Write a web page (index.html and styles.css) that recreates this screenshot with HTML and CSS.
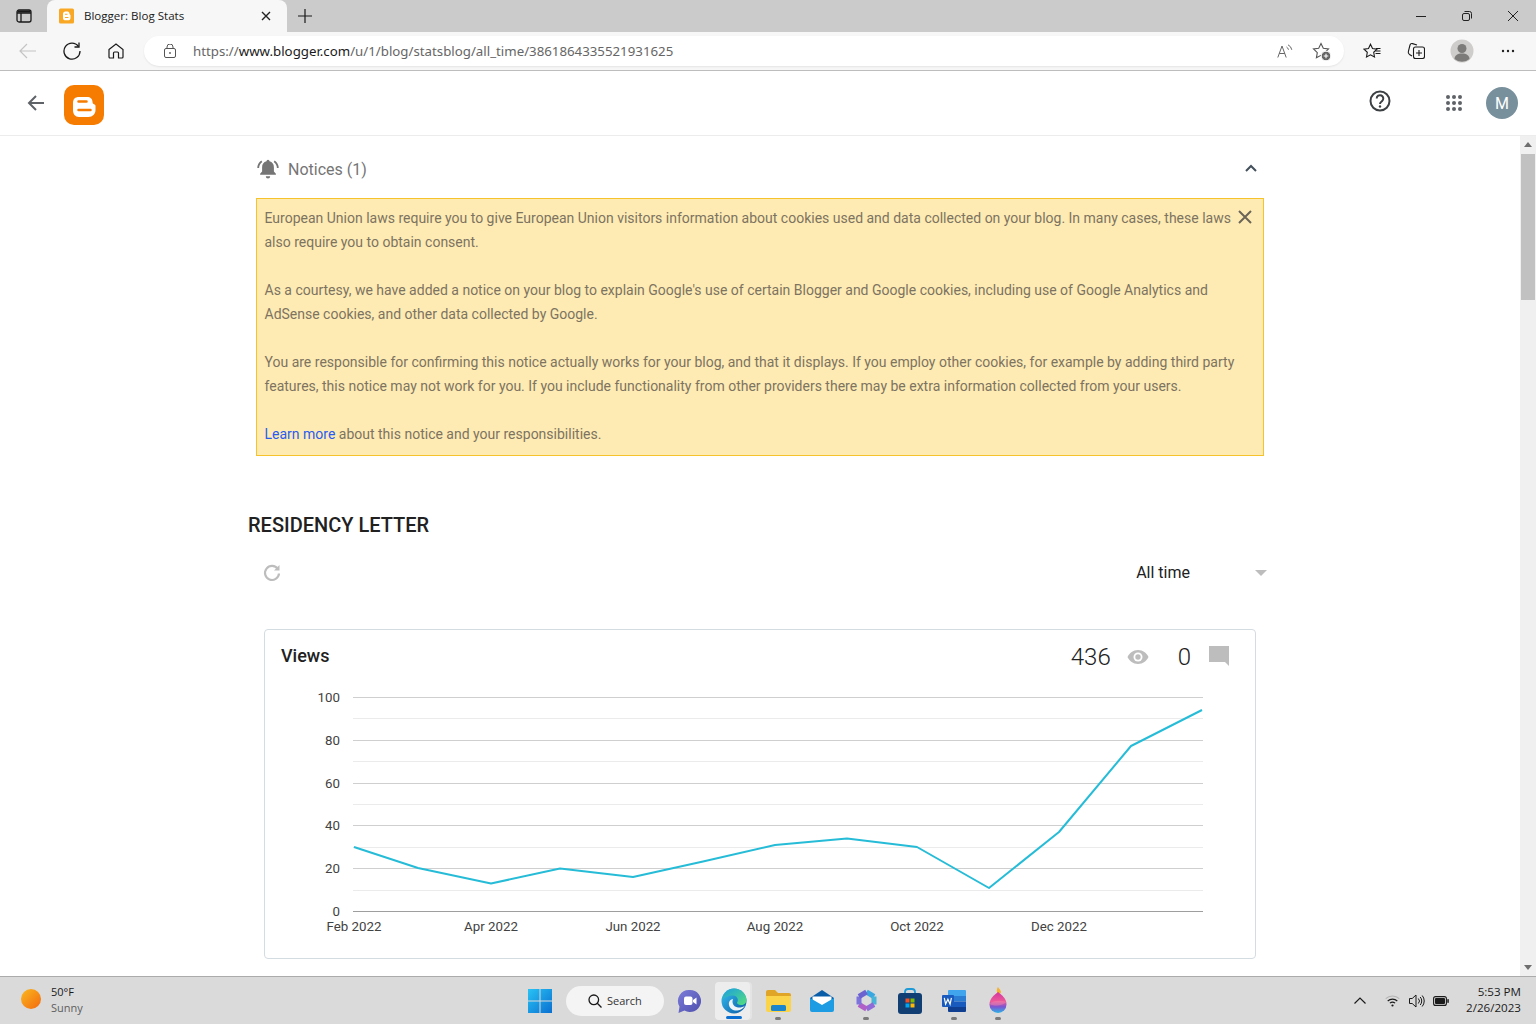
FILE: index.html
```html
<!DOCTYPE html>
<html lang="en">
<head>
<meta charset="utf-8">
<title>Blogger: Blog Stats</title>
<link rel="stylesheet" href="styles.css">
</head>
<body>
<div class="screen">
  <div class="tabstrip">
    <div class="tab-side">
      <svg width="16" height="14" viewBox="0 0 16 14" fill="none" stroke="#1a1a1a" stroke-width="1.3"><rect x="1" y="1" width="14" height="12" rx="2"/><path d="M1 4h14M5 4v9" /><path d="M1.5 2.5h13" stroke-width="2"/></svg>
    </div>
    <div class="tab">
      <svg class="tab-fav" width="16" height="16" viewBox="0 0 16 16"><rect width="15" height="15" y=".5" rx="1.5" fill="#f9a825"/><path d="M4 6c0-1.600 1-2.500 2.400-2.500H8.500C9.800 3.500 10.500 4.500 10.500 6c0 .6.800.5 1 1.200V10c0 1.400-1 2.300-2.400 2.300H6.300C5 12.300 4 11.400 4 10z" fill="#fff"/><path d="M6 6.300h2.500M6 9.500h3.500" stroke="#f9a825" stroke-width="1.100"/></svg>
      <span class="tab-title">Blogger: Blog Stats</span>
      <svg class="tab-close" width="10" height="10" viewBox="0 0 10 10" stroke="#222" stroke-width="1.400"><path d="M1 1l8 8M9 1l-8 8"/></svg>
    </div>
    <div class="tab-new">
      <svg width="14" height="14" viewBox="0 0 14 14" stroke="#1a1a1a" stroke-width="1.200"><path d="M7 0v14M0 7h14"/></svg>
    </div>
    <div class="win-controls">
      <div class="win-btn"><svg width="10" height="10" viewBox="0 0 10 10" stroke="#222"><path d="M0 5.500h10"/></svg></div>
      <div class="win-btn"><svg width="10" height="10" viewBox="0 0 10 10" fill="none" stroke="#222"><rect x=".5" y="2.500" width="7" height="7" rx="1.500"/><path d="M2.500 .5h5a2 2 0 0 1 2 2v5"/></svg></div>
      <div class="win-btn"><svg width="10" height="10" viewBox="0 0 10 10" stroke="#222"><path d="M0 0l10 10M10 0L0 10"/></svg></div>
    </div>
  </div>

  <div class="toolbar">
    <div class="tool-btn"><svg width="18" height="16" viewBox="0 0 18 16" fill="none" stroke="#c4c4c4" stroke-width="1.200"><path d="M17 8H1M8 1L1 8l7 7"/></svg></div>
    <div class="tool-btn"><svg width="18" height="18" viewBox="0 0 18 18" fill="none" stroke="#1a1a1a" stroke-width="1.300"><path d="M15.500 4.500A8 8 0 1 0 17 9"/><path d="M16 .5v4.500h-4.500"/></svg></div>
    <div class="tool-btn"><svg width="16" height="16" viewBox="0 0 16 16" fill="none" stroke="#1a1a1a" stroke-width="1.200"><path d="M1 6.500L8 1l7 5.500V14a1 1 0 0 1-1 1h-3.500v-5a1 1 0 0 0-1-1h-3a1 1 0 0 0-1 1v5H2a1 1 0 0 1-1-1z"/></svg></div>
    <div class="address">
      <svg class="lock" width="12" height="14" viewBox="0 0 12 14" fill="none" stroke="#555" stroke-width="1"><rect x=".5" y="4.500" width="11" height="9" rx="1.500"/><path d="M3 4.500V3a3 3 0 0 1 6 0v1.500"/><circle cx="6" cy="9" r=".9" fill="#555" stroke="none"/></svg>
      <span class="url"><span class="url-dim">https://</span>www.blogger.com<span class="url-dim">/u/1/blog/statsblog/all_time/3861864335521931625</span></span>
      <span class="address-end">
        <svg width="16" height="14" viewBox="0 0 16 14" fill="none" stroke="#666" stroke-width="1"><path d="M.8 13.500L5 2l4.200 11.500M2.200 9.500h5.600"/><path d="M9.500 3a4.500 4.500 0 0 1 2 2.700M11 .8a7 7 0 0 1 3.800 5"/></svg>
        <svg width="19" height="19" viewBox="0 0 19 19" fill="none" stroke="#555" stroke-width="1.100"><path d="M9 1.500l2.300 4.800 5.200.7-3.800 3.600.9 5.200L9 13.300l-4.600 2.500.9-5.200L1.500 7l5.200-.7z"/><circle cx="14" cy="14" r="4.800" fill="#666" stroke="#fff" stroke-width="1"/><path d="M14 11.700v4.600M11.700 14h4.600" stroke="#fff"/></svg>
      </span>
    </div>
    <div class="tool-right">
      <div class="tool-btn"><svg width="18" height="17" viewBox="0 0 18 17" fill="none" stroke="#1a1a1a" stroke-width="1.100"><path d="M7.500 1.200l2 4.300 4.500.6-3.300 3.200.8 4.700L7.500 11.800l-4 2.200.8-4.700L1 6.100l4.500-.6z"/><path d="M12.500 8h5M13 5.500h4.500M12.500 10.500h5" /></svg></div>
      <div class="tool-btn"><svg width="18" height="18" viewBox="0 0 18 18" fill="none" stroke="#1a1a1a" stroke-width="1.100"><path d="M5 14l-2.500-1.500C1 11.500 1 10.500 1.400 9.300L3 3c.4-1.300 1.300-1.700 2.500-1.400L10 3"/><rect x="6.500" y="5" width="11" height="11.500" rx="2" fill="#f7f7f7"/><path d="M12 8v6M9 11h6"/></svg></div>
      <div class="tool-btn tool-gap">
        <svg width="24" height="24" viewBox="0 0 24 24"><circle cx="12" cy="12" r="11.500" fill="#cfcdcb"/><circle cx="12" cy="9.500" r="4.500" fill="#7d7b79"/><path d="M4.500 20c0-3.500 3-5.500 7.500-5.500s7.500 2 7.500 5.500a11.500 11.500 0 0 1-15 0z" fill="#7d7b79"/></svg>
      </div>
      <div class="tool-btn tool-gap"><svg width="14" height="4" viewBox="0 0 14 4" fill="#222"><circle cx="2" cy="2" r="1.200"/><circle cx="7" cy="2" r="1.200"/><circle cx="12" cy="2" r="1.200"/></svg></div>
    </div>
  </div>

  <div class="viewport">
    <header class="app-header">
      <svg class="app-back" width="18" height="16" viewBox="0 0 18 16" fill="none" stroke="#5f6368" stroke-width="2"><path d="M17 8H2M9 1L2 8l7 7"/></svg>
      <svg class="app-logo" width="40" height="40" viewBox="0 0 40 40"><rect width="40" height="40" rx="10" fill="#f57c00"/><path d="M9 18c0-4 2-6 6-6h8c3.500 0 5.500 2 5.500 5 0 1.500 1 2 2 2.500.7.300 1 .8 1 1.500v4c0 4-3 7-7 7H15c-4 0-6-3-6-7z" fill="#fff"/><path d="M14.500 16.500h8M14.500 25h12" stroke="#f57c00" stroke-width="2.500" stroke-linecap="round"/></svg>
      <div class="app-actions">
        <svg class="app-help" width="22" height="22" viewBox="0 0 22 22" fill="none" stroke="#3c4043" stroke-width="2"><circle cx="11" cy="11" r="9.500"/><path d="M7.700 8.500a3.300 3.300 0 1 1 5.300 2.600c-1.300 1-2 1.500-2 3"/><circle cx="11" cy="16.500" r="1.200" fill="#3c4043" stroke="none"/></svg>
        <svg class="app-grid" width="16" height="16" viewBox="0 0 16 16" fill="#5f6368"><circle cx="2" cy="2" r="2"/><circle cx="8" cy="2" r="2"/><circle cx="14" cy="2" r="2"/><circle cx="2" cy="8" r="2"/><circle cx="8" cy="8" r="2"/><circle cx="14" cy="8" r="2"/><circle cx="2" cy="14" r="2"/><circle cx="8" cy="14" r="2"/><circle cx="14" cy="14" r="2"/></svg>
        <div class="avatar">M</div>
      </div>
    </header>

    <div class="page-row">
      <main class="page">
        <div class="content">
          <div class="notices-head">
            <svg width="22" height="20" viewBox="0 0 22 20" fill="#757575"><path d="M11 .8a1.500 1.500 0 0 1 1.500 1.500c2.900.7 4.400 3 4.400 5.900v4.300l2 2.200v1H3.100v-1l2-2.200V8.200c0-2.900 1.500-5.200 4.400-5.900A1.500 1.500 0 0 1 11 .8z"/><path d="M8.800 17.300h4.400a2.200 2.200 0 0 1-4.400 0z"/><path d="M4.800 2.200A8.500 8.500 0 0 0 1.200 9M17.200 2.200A8.500 8.500 0 0 1 20.800 9" fill="none" stroke="#757575" stroke-width="1.800"/></svg>
            <span class="notices-title">Notices (1)</span>
            <svg class="notices-chevron" width="12" height="8" viewBox="0 0 12 8" fill="none" stroke="#44505c" stroke-width="2"><path d="M1 7l5-5 5 5"/></svg>
          </div>
          <div class="notice">
            <svg class="notice-close" width="14" height="14" viewBox="0 0 14 14" stroke="#6b6558" stroke-width="2"><path d="M1 1l12 12M13 1L1 13"/></svg>
            <p>European Union laws require you to give European Union visitors information about cookies used and data collected on your blog. In many cases, these laws<br>also require you to obtain consent.</p>
            <p>As a courtesy, we have added a notice on your blog to explain Google's use of certain Blogger and Google cookies, including use of Google Analytics and<br>AdSense cookies, and other data collected by Google.</p>
            <p>You are responsible for confirming this notice actually works for your blog, and that it displays. If you employ other cookies, for example by adding third party<br>features, this notice may not work for you. If you include functionality from other providers there may be extra information collected from your users.</p>
            <p><a class="notice-link" href="#">Learn more</a> about this notice and your responsibilities.</p>
          </div>

          <h1 class="blog-title">RESIDENCY LETTER</h1>

          <div class="controls">
            <svg class="refresh" width="18" height="18" viewBox="0 0 18 18" fill="none" stroke="#bdbdbd" stroke-width="2.200"><path d="M14.800 5A7 7 0 1 0 16 9.500"/><path d="M16.500 1v5.500H11" fill="#bdbdbd" stroke="none"/></svg>
            <span class="range">All time</span>
            <span class="range-arrow"></span>
          </div>

          <section class="card">
            <div class="card-head">
              <h2 class="card-title">Views</h2>
              <span class="stat-num">436</span>
              <svg class="stat-eye" width="22" height="16" viewBox="0 0 22 16"><path d="M11 1C6 1 2.500 4 .5 8c2 4 5.500 7 10.500 7s8.500-3 10.500-7C19.500 4 16 1 11 1z" fill="#bdbdbd"/><circle cx="11" cy="8" r="4.500" fill="#fff"/><circle cx="11" cy="8" r="2.700" fill="#bdbdbd"/></svg>
              <span class="stat-num stat-zero">0</span>
              <svg class="stat-comment" width="20" height="20" viewBox="0 0 20 20"><path d="M0 0h20v20l-4-4H0z" fill="#bdbdbd"/></svg>
            </div>
            <svg class="chart" width="990" height="278" viewBox="265 680 990 278">
              <g class="grid-minor">
                <path d="M353 718.500h850M353 761.500h850M353 804.500h850M353 847.500h850M353 890.500h850"/>
              </g>
              <g class="grid-major">
                <path d="M353 697.500h850M353 740.500h850M353 783.500h850M353 825.500h850M353 868.500h850"/>
              </g>
              <path class="axis" d="M353 911.500h850"/>
              <polyline class="series" points="354,847 418,868 491,883.500 560,868.500 633,877 703,861.500 775,845 847,838.500 917,847 989,888 1059,832 1131,746 1202,710"/>
              <g class="y-labels">
                <text x="340" y="702">100</text>
                <text x="340" y="745">80</text>
                <text x="340" y="788">60</text>
                <text x="340" y="830">40</text>
                <text x="340" y="873">20</text>
                <text x="340" y="916">0</text>
              </g>
              <g class="x-labels">
                <text x="354" y="931">Feb 2022</text>
                <text x="491" y="931">Apr 2022</text>
                <text x="633" y="931">Jun 2022</text>
                <text x="775" y="931">Aug 2022</text>
                <text x="917" y="931">Oct 2022</text>
                <text x="1059" y="931">Dec 2022</text>
              </g>
            </svg>
          </section>
        </div>
      </main>
      <div class="scrollbar">
        <span class="sb-arrow sb-up"></span>
        <div class="sb-track"><div class="sb-thumb"></div></div>
        <span class="sb-arrow sb-down"></span>
      </div>
    </div>
  </div>

  <footer class="taskbar">
    <div class="weather">
      <span class="sun"></span>
      <div class="weather-text"><span class="temp">50°F</span><span class="cond">Sunny</span></div>
    </div>
    <div class="task-center">
      <div class="task-icon">
        <svg width="24" height="24" viewBox="0 0 24 24"><defs><linearGradient id="winG" x1="0" y1="0" x2="1" y2="1"><stop offset="0" stop-color="#29c3f5"/><stop offset="1" stop-color="#0a6fd0"/></linearGradient></defs><path d="M0 0h11.500v11.500H0zM12.500 0H24v11.500H12.500zM0 12.500h11.500V24H0zM12.500 12.500H24V24H12.500z" fill="url(#winG)"/></svg>
      </div>
      <div class="search-pill">
        <svg width="14" height="14" viewBox="0 0 14 14" fill="none" stroke="#1a1a1a" stroke-width="1.300"><circle cx="5.800" cy="5.800" r="4.800"/><path d="M9.300 9.300l4.200 4.200"/></svg>
        <span>Search</span>
      </div>
      <div class="task-icon">
        <svg width="24" height="26" viewBox="0 0 24 26"><defs><linearGradient id="chatG" x1="0" y1="0" x2="1" y2="1"><stop offset="0" stop-color="#7b7bd9"/><stop offset="1" stop-color="#4f4fae"/></linearGradient></defs><path d="M13 2a11 11 0 1 1-5.500 20.500L1.500 25l1-6.500A11 11 0 0 1 13 2z" fill="url(#chatG)"/><rect x="7" y="8.500" width="8.500" height="8.500" rx="2" fill="#fff"/><path d="M16 12l3.500-2.500v7L16 14z" fill="#fff"/></svg>
      </div>
      <div class="task-icon task-active">
        <svg width="26" height="26" viewBox="0 0 26 26"><defs><linearGradient id="edgeA" x1="0" y1="0" x2="1" y2="1"><stop offset="0" stop-color="#35c1f1"/><stop offset="1" stop-color="#0c59a4"/></linearGradient><linearGradient id="edgeB" x1="0" y1="0" x2="1" y2="1"><stop offset="0" stop-color="#1b9de2"/><stop offset="1" stop-color="#54e07c"/></linearGradient></defs><circle cx="13" cy="13" r="12.500" fill="url(#edgeA)"/><path d="M1 12C2 5 7 .5 13 .5c7 0 12.500 5.500 12.500 11.500 0 3-2.500 5-5.500 5-2.500 0-4-1-4-2.500 2-2 .5-7-4-7C8 7.500 3.500 9 1 12z" fill="url(#edgeB)"/><path d="M12 11c-3 .5-4.500 3-4 6 .6 3.500 4.500 6 8.500 5.500 3-.3 6-2 7.500-5-2 1.800-5.500 2.600-8 1.800-3.500-1-5.500-4.300-4-8.300z" fill="#f0f4f9"/></svg>
        <span class="run-active"></span>
      </div>
      <div class="task-icon">
        <svg width="25" height="22" viewBox="0 0 25 22"><path d="M0 2a2 2 0 0 1 2-2h7l3 3h11a2 2 0 0 1 2 2v3H0z" fill="#e0a526"/><path d="M0 6h25v14a2 2 0 0 1-2 2H2a2 2 0 0 1-2-2z" fill="#fbd44a"/><rect x="5" y="15" width="15" height="6" rx="1.500" fill="#1b86cf"/></svg>
        <span class="run-dot"></span>
      </div>
      <div class="task-icon">
        <svg width="24" height="22" viewBox="0 0 24 22"><path d="M0 8L12 0l12 8v1L12 16 0 9z" fill="#0a5ea8"/><path d="M2.500 6.500h19v6L12 17l-9.500-4.500z" fill="#fff"/><path d="M0 8l12 7 12-7v12a2 2 0 0 1-2 2H2a2 2 0 0 1-2-2z" fill="#1d9ce3"/></svg>
      </div>
      <div class="task-icon">
        <svg width="21" height="23" viewBox="0 0 21 23" fill="none" stroke-width="5" stroke-linejoin="round"><path d="M10.500 3L18 7.500" stroke="#3aa7e0"/><path d="M18 7.500v8" stroke="#48b5d8"/><path d="M18 15.500L10.500 20" stroke="#8e6bd8"/><path d="M10.500 20L3 15.500" stroke="#b05fc8"/><path d="M3 15.500v-8" stroke="#7c74dc"/><path d="M3 7.500L10.500 3" stroke="#6c62d0"/></svg>
        <span class="run-dot"></span>
      </div>
      <div class="task-icon">
        <svg width="24" height="26" viewBox="0 0 24 26"><path d="M7 7V4a3 3 0 0 1 3-3h4a3 3 0 0 1 3 3v3" fill="none" stroke="#1e9ad6" stroke-width="1.800"/><rect y="5" width="24" height="21" rx="3" fill="#123f73"/><path d="M7.500 10.500h4v4h-4z" fill="#f25022"/><path d="M12.500 10.500h4v4h-4z" fill="#7fba00"/><path d="M7.500 15.500h4v4h-4z" fill="#00a4ef"/><path d="M12.500 15.500h4v4h-4z" fill="#ffb900"/></svg>
      </div>
      <div class="task-icon">
        <svg width="24" height="22" viewBox="0 0 24 22"><path d="M6 1a1 1 0 0 1 1-1h16a1 1 0 0 1 1 1v5H6z" fill="#41a5ee"/><path d="M6 6h18v5.500H6z" fill="#2b7cd3"/><path d="M6 11.500h18V17H6z" fill="#185abd"/><path d="M6 17h18v4a1 1 0 0 1-1 1H7a1 1 0 0 1-1-1z" fill="#103f91"/><rect y="5" width="12" height="12" rx="1" fill="#185abd"/><path d="M2.300 7.800l1.300 6.400 2.300-5 2.200 5 1.300-6.400" fill="none" stroke="#fff" stroke-width="1.200"/></svg>
        <span class="run-dot"></span>
      </div>
      <div class="task-icon">
        <svg width="20" height="27" viewBox="0 0 20 27"><defs><linearGradient id="pnt" x1="0" y1="0" x2="0" y2="1"><stop offset="0" stop-color="#d4359f"/><stop offset=".45" stop-color="#ec5a9a"/><stop offset=".7" stop-color="#7d55d0"/><stop offset="1" stop-color="#27b5e8"/></linearGradient></defs><path d="M10 0c.8 2 3 3 3 5s-2 2.500-3 1.500S8 3 10 0z" fill="#f6b12d"/><path d="M10 5c4 3 8.500 6.500 8.500 12.500a8.500 8.500 0 0 1-17 0C1.500 11.500 6 8 10 5z" fill="url(#pnt)"/><path d="M1.500 17c4-4 11-4 17-2-3 3-10 5-17 2z" fill="#f08ab0" opacity=".45"/></svg>
        <span class="run-dot"></span>
      </div>
    </div>
    <div class="tray">
      <svg class="tray-chevron" width="12" height="7" viewBox="0 0 12 7" fill="none" stroke="#1a1a1a" stroke-width="1.200"><path d="M.5 6.500L6 1l5.500 5.500"/></svg>
      <svg class="tray-wifi" width="15" height="12" viewBox="0 0 15 12" fill="none" stroke-width="1.100"><path d="M.7 3.700a10 10 0 0 1 13.600 0" stroke="#b3b3b3"/><path d="M2.700 6a7 7 0 0 1 9.600 0M4.900 8.200a4 4 0 0 1 5.200 0" stroke="#1a1a1a"/><circle cx="7.500" cy="10.500" r="1.100" fill="#1a1a1a"/></svg>
      <svg class="tray-sound" width="16" height="14" viewBox="0 0 16 14" fill="none" stroke="#1a1a1a" stroke-width="1"><path d="M.5 4.500h2.700L7 1v12L3.200 9.500H.5z"/><path d="M9.300 4.500a3.500 3.500 0 0 1 0 5M11.200 3a6 6 0 0 1 0 8M13.200 1.500a8.500 8.500 0 0 1 0 11"/></svg>
      <svg class="tray-batt" width="16" height="10" viewBox="0 0 16 10"><rect x=".6" y=".6" width="12.800" height="8.800" rx="2" fill="none" stroke="#1a1a1a" stroke-width="1.100"/><rect x="2" y="2" width="10" height="6" rx="1" fill="#1a1a1a"/><rect x="14.300" y="3" width="1.500" height="4" rx=".7" fill="#1a1a1a"/></svg>
      <div class="clock"><span>5:53 PM</span><span>2/26/2023</span></div>
    </div>
  </footer>
</div>
</body>
</html>
```
FILE: styles.css
```css
* { box-sizing: border-box; }
html, body { margin: 0; padding: 0; height: 100%; overflow: hidden; }
body { font-family: Roboto, "Liberation Sans", sans-serif; background: #fff; }
svg { display: block; flex: none; }
p { margin: 0; }

.screen { width: 1536px; height: 1024px; display: flex; flex-direction: column; }

/* Tab strip */
.tabstrip { height: 32px; background: #cbcbcb; display: flex; align-items: flex-end; flex: none; }
.tab-side { width: 47px; height: 32px; display: flex; align-items: center; justify-content: center; }
.tab { width: 240px; height: 32px; background: #f7f7f7; border-radius: 8px 8px 0 0; display: flex; align-items: center; padding: 0 16px 0 12px; }
.tab-fav { margin-right: 9px; }
.tab-title { font: 11.550px "Open Sans", "Noto Sans", sans-serif; color: #1a1a1a; flex: 1; position: relative; top: -1px; }
.tab-new { width: 36px; height: 32px; display: flex; align-items: center; justify-content: center; }
.win-controls { margin-left: auto; display: flex; height: 32px; }
.win-btn { width: 46px; height: 32px; display: flex; align-items: center; justify-content: center; }

/* Toolbar */
.toolbar { height: 39px; background: #f7f7f7; border-bottom: 1px solid #bdbdbd; display: flex; align-items: center; padding: 0 6px; flex: none; }
.tool-btn { width: 44px; height: 32px; display: flex; align-items: center; justify-content: center; flex: none; }
.tool-gap { margin-left: 2px; }
.address { width: 1200px; height: 30px; margin-left: 6px; background: #fff; border-radius: 15px; box-shadow: 0 1px 2px rgba(0,0,0,.08); display: flex; align-items: center; padding: 0 13px 0 20px; }
.lock { margin-right: 17px; }
.url { font: 13.280px "Noto Sans", "Open Sans", sans-serif; color: #1a1a1a; white-space: nowrap; }
.url-dim { color: #666; }
.address-end { margin-left: auto; display: flex; align-items: center; gap: 19px; }
.tool-right { display: flex; margin-left: 6px; }

/* App */
.viewport { flex: 1; min-height: 0; display: flex; flex-direction: column; }
.app-header { height: 65px; flex: none; border-bottom: 1px solid #ececec; display: flex; align-items: center; padding: 0 18px 0 27px; }
.app-back { margin-right: 19px; }
.app-logo { margin-top: 4px; }
.app-actions { margin-left: auto; display: flex; align-items: center; }
.app-help { margin-right: 55px; margin-top: -4px; }
.app-grid { margin-right: 24px; }
.avatar { width: 32px; height: 32px; border-radius: 50%; background: #78909c; color: #fff; font-size: 16px; display: flex; align-items: center; justify-content: center; }

.page-row { flex: 1; min-height: 0; display: flex; }
.page { flex: 1; min-width: 0; overflow: hidden; }
.content { width: 1008px; margin: 0 auto; }

.notices-head { height: 62px; display: flex; align-items: center; color: #757575; padding-left: 1px; padding-top: 4px; }
.notices-title { font-size: 16px; margin-left: 9px; }
.notices-chevron { margin-left: auto; margin-right: 7px; margin-top: -3px; }

.notice { position: relative; background: #feebb3; border: 1px solid #f6c32c; padding: 7px 8px 9px 7.500px; font-size: 14px; line-height: 24px; color: #7d7361; height: 258px; display: flex; flex-direction: column; gap: 24px; white-space: nowrap; }
.notice-close { position: absolute; right: 11px; top: 11px; }
.notice-link { color: #2a5bf0; text-decoration: none; }

.blog-title { margin: 57px 0 0 -8px; font-size: 20px; font-weight: 500; line-height: 24px; color: #212121; }

.controls { height: 40px; margin-top: 15px; display: flex; align-items: center; }
.refresh { margin-left: 7px; margin-top: 2px; }
.range { margin-left: auto; font-size: 16px; color: #212121; }
.range-arrow { width: 0; height: 0; border: 6px solid transparent; border-top-color: #bdbdbd; border-bottom-width: 0; margin: 2px -3px 0 65px; }

.card { margin: 37px 8px 0; height: 330px; border: 1px solid #d3dce1; border-radius: 4px; background: #fff; }
.card-head { height: 50px; display: flex; align-items: center; padding: 2px 26px 0 16px; }
.card-title { margin: -2px auto 0 0; font-size: 18px; font-weight: 500; color: #212121; }
.stat-num { font-size: 24px; font-weight: 300; color: #212121; position: relative; top: 1px; }
.stat-eye { margin-left: 16px; margin-top: 2px; }
.stat-zero { margin-left: 29px; }
.stat-comment { margin-left: 18px; }

.chart { font-size: 13.300px; font-family: Roboto, sans-serif; }
.grid-minor path { stroke: #ebebeb; fill: none; }
.grid-major path { stroke: #cfcfcf; fill: none; }
.axis { stroke: #9e9e9e; fill: none; }
.series { fill: none; stroke: #26bcd7; stroke-width: 2; stroke-linejoin: round; }
.y-labels text { text-anchor: end; fill: #424242; }
.x-labels text { text-anchor: middle; fill: #424242; }

/* Scrollbar */
.scrollbar { width: 16px; background: #f0f0f0; display: flex; flex-direction: column; align-items: center; flex: none; }
.sb-arrow { width: 0; height: 0; border: 4px solid transparent; flex: none; }
.sb-up { border-bottom: 5px solid #6e6e6e; border-top-width: 0; margin-top: 6px; }
.sb-down { border-top: 5px solid #6e6e6e; border-bottom-width: 0; margin-bottom: 6px; }
.sb-track { flex: 1; width: 100%; padding: 7px 1px 0; }
.sb-thumb { height: 146px; background: #c1c1c1; }

/* Taskbar */
.taskbar { height: 48px; flex: none; background: #dadada; border-top: 1px solid #ababab; display: flex; align-items: center; }
.weather { width: 518px; display: flex; align-items: center; padding-left: 21px; gap: 10px; flex: none; }
.sun { width: 20px; height: 20px; border-radius: 50%; background: linear-gradient(135deg, #f9b91f, #f4690f); margin-top: -3px; }
.weather-text { display: flex; flex-direction: column; font: 11px/16px "Open Sans", "Noto Sans", sans-serif; margin-top: -1px; }
.temp { color: #1a1a1a; }
.cond { color: #5e5e5e; }
.task-center { display: flex; align-items: center; width: 502px; flex: none; }
.task-icon { position: relative; width: 44px; height: 38px; display: flex; align-items: center; justify-content: center; flex: none; }
.task-active { background: #ededed; border-radius: 4px; width: 35px; margin: 0 6px 0 4px; padding-left: 3px; box-shadow: 2px 0 0 0 #e4e4e4; }
.search-pill { width: 98px; height: 30px; margin: 0 3px 0 4px; background: #f4f4f4; border-radius: 15px; display: flex; align-items: center; padding-left: 22px; gap: 5px; font: 11px "Open Sans", "Noto Sans", sans-serif; color: #333; flex: none; }
.run-dot { position: absolute; left: 19px; bottom: 0; width: 6px; height: 3px; border-radius: 2px; background: #7a7a7a; }
.run-active { position: absolute; left: 11px; bottom: 1px; width: 16px; height: 3px; border-radius: 2px; background: #0a6fd0; }
.tray { flex: 1; display: flex; align-items: center; padding-right: 15px; }
.tray-chevron { margin-left: 334px; }
.tray-wifi { margin-left: 19px; }
.tray-sound { margin-left: 9px; }
.tray-batt { margin-left: 8px; }
.clock { margin-left: auto; display: flex; flex-direction: column; align-items: flex-end; font: 11.600px/16px "Open Sans", "Noto Sans", sans-serif; color: #1a1a1a; margin-top: -1px; }
```
